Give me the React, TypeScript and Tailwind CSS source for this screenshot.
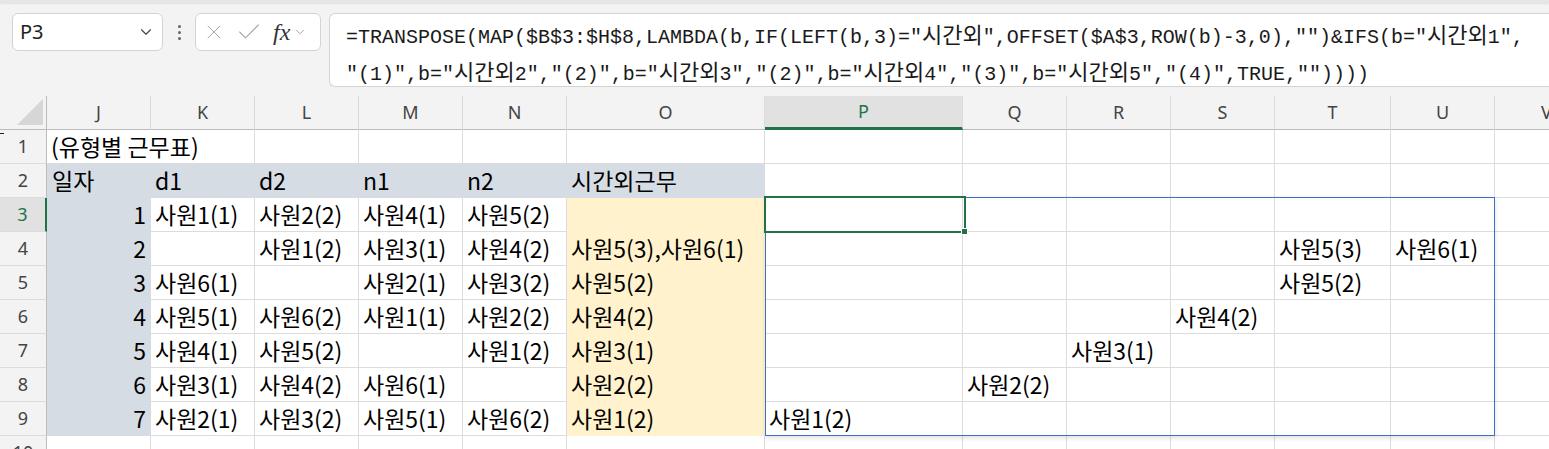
import React from 'react';
import { ChevronDown, X, Check } from 'lucide-react';

const COL_LETTERS = ['J', 'K', 'L', 'M', 'N', 'O', 'P', 'Q', 'R', 'S', 'T', 'U', 'V'];

const GRID_COLS =
  'grid grid-cols-[47px_104px_104px_104px_104px_104px_198px_198px_104px_104px_104px_116px_104px_104px]';

// K..N, O, then spill P..U
const body: { day: string; shifts: string[]; extra: string; spill: string[] }[] = [
  { day: '1', shifts: ['사원1(1)', '사원2(2)', '사원4(1)', '사원5(2)'], extra: '', spill: ['', '', '', '', '', ''] },
  { day: '2', shifts: ['', '사원1(2)', '사원3(1)', '사원4(2)'], extra: '사원5(3),사원6(1)', spill: ['', '', '', '', '사원5(3)', '사원6(1)'] },
  { day: '3', shifts: ['사원6(1)', '', '사원2(1)', '사원3(2)'], extra: '사원5(2)', spill: ['', '', '', '', '사원5(2)', ''] },
  { day: '4', shifts: ['사원5(1)', '사원6(2)', '사원1(1)', '사원2(2)'], extra: '사원4(2)', spill: ['', '', '', '사원4(2)', '', ''] },
  { day: '5', shifts: ['사원4(1)', '사원5(2)', '', '사원1(2)'], extra: '사원3(1)', spill: ['', '', '사원3(1)', '', '', ''] },
  { day: '6', shifts: ['사원3(1)', '사원4(2)', '사원6(1)', ''], extra: '사원2(2)', spill: ['', '사원2(2)', '', '', '', ''] },
  { day: '7', shifts: ['사원2(1)', '사원3(2)', '사원5(1)', '사원6(2)'], extra: '사원1(2)', spill: ['사원1(2)', '', '', '', '', ''] },
];

const FORMULA = [
  '=TRANSPOSE(MAP($B$3:$H$8,LAMBDA(b,IF(LEFT(b,3)="시간외",OFFSET($A$3,ROW(b)-3,0),"")&IFS(b="시간외1",',
  '"(1)",b="시간외2","(2)",b="시간외3","(2)",b="시간외4","(3)",b="시간외5","(4)",TRUE,""))))',
];

const cellFont = "font-['Noto_Sans_CJK_KR',sans-serif] text-[23px] text-black leading-none";

// hangul in the formula bar is drawn a little wider than the mono glyphs
function FormulaLine({ text }: { text: string }) {
  const parts = text.split(/([가-힣]+)/);
  return (
    <div>
      {parts.map((p, i) =>
        /[가-힣]/.test(p) ? (
          <span key={i} className="font-['Noto_Sans_CJK_KR',sans-serif] text-[22px]">
            {p}
          </span>
        ) : (
          <span key={i}>{p}</span>
        )
      )}
    </div>
  );
}

function Cell({
  children,
  fill,
  right,
  className = '',
}: {
  children?: React.ReactNode;
  fill?: 'blue' | 'yellow';
  right?: boolean;
  className?: string;
}) {
  const bg =
    fill === 'blue'
      ? 'bg-[#d6dce4] border-[#d6dce4]'
      : fill === 'yellow'
      ? 'bg-[#fff2cc] border-[#fff2cc]'
      : 'bg-white border-[#dcdcdc]';
  return (
    <div
      className={`h-[34px] border-r border-b ${bg} flex items-center whitespace-nowrap overflow-visible ${
        right ? 'justify-end pr-[4px]' : 'pl-[4px]'
      } ${cellFont} ${className}`}
    >
      {children}
    </div>
  );
}

function RowHead({ n, active }: { n: number; active?: boolean }) {
  return (
    <div
      className={`h-[34px] border-b border-[#dcdcdc] flex items-center justify-center font-['Noto_Sans',sans-serif] text-[18px] ${
        active
          ? 'bg-[#e1e1e1] text-[#217346] border-r-2 border-r-[#217346]'
          : 'bg-[#f3f3f3] text-[#444] border-r border-r-[#bcbcbc]'
      }`}
    >
      {n}
    </div>
  );
}

function FormulaBar() {
  return (
    <div className="relative h-[96px] bg-[#f3f3f3] flex items-start pt-[13px] pl-[12px]">
      <div className="absolute left-0 right-0 top-0 h-[3px] bg-[#e6e6e6] shadow-[0_1px_2px_rgba(0,0,0,0.08)]" />
      <div className="w-[151px] h-[38px] bg-white border border-[#d4d4d4] rounded-[6px] flex items-center justify-between pl-[7px] pr-[7px]">
        <span className="font-['Noto_Sans',sans-serif] text-[20px] text-[#222]">P3</span>
        <ChevronDown size={18} strokeWidth={1.5} className="text-[#444]" />
      </div>
      <div className="w-[32px] h-[38px] flex flex-col items-center justify-center gap-[3px]">
        <span className="w-[3px] h-[3px] rounded-full bg-[#666]" />
        <span className="w-[3px] h-[3px] rounded-full bg-[#666]" />
        <span className="w-[3px] h-[3px] rounded-full bg-[#666]" />
      </div>
      <div className="w-[126px] h-[38px] bg-white border border-[#d4d4d4] rounded-[6px] flex items-center pl-[6px]">
        <X size={24} strokeWidth={1} className="text-[#a8a8a8]" />
        <Check size={28} strokeWidth={1} className="text-[#a8a8a8] ml-[9px]" />
        <span className="ml-[10px] font-['Liberation_Serif',serif] italic text-[24px] text-[#333] leading-none">
          fx
        </span>
        <ChevronDown size={14} strokeWidth={1.3} className="text-[#888] ml-[3px]" />
      </div>
      <div className="ml-[8px] flex-1 h-[74px] bg-white border border-r-0 border-[#d4d4d4] rounded-l-[6px] pl-[16px] pt-[3px] font-['Liberation_Mono',monospace] text-[20px] leading-[33px] text-[#1a1a1a] whitespace-nowrap">
        {FORMULA.map((line, i) => (
          <FormulaLine key={i} text={line} />
        ))}
      </div>
    </div>
  );
}

function ColumnHeader() {
  return (
    <div className={`${GRID_COLS} h-[34px]`}>
      <div className="bg-[#f3f3f3] border-r border-b border-[#bcbcbc] relative">
        <svg className="absolute right-[3px] bottom-[4px]" width="26" height="26" viewBox="0 0 26 26">
          <polygon points="26,0 26,26 0,26" fill="#d6d6d6" />
        </svg>
      </div>
      {COL_LETTERS.map((c) => (
        <div
          key={c}
          className={`flex items-center justify-center font-['Noto_Sans',sans-serif] text-[18px] border-r border-r-[#dcdcdc] ${
            c === 'P'
              ? 'bg-[#e1e1e1] text-[#217346] border-b-[3px] border-b-[#217346]'
              : 'bg-[#f3f3f3] text-[#444] border-b border-b-[#bcbcbc]'
          }`}
        >
          {c}
        </div>
      ))}
    </div>
  );
}

export default function App() {
  return (
    <div className="w-[1549px] h-[449px] overflow-hidden bg-white">
      <FormulaBar />
      <div className="w-[1599px]">
        <ColumnHeader />
        <div className={`${GRID_COLS} relative`}>
          <div className="absolute left-0 top-[3px] w-[4px] h-[1px] bg-[#222]" />

          {/* row 1 */}
          <RowHead n={1} />
          <Cell className="col-span-2">(유형별 근무표)</Cell>
          {Array.from({ length: 11 }).map((_, i) => (
            <Cell key={`r1-${i}`} />
          ))}

          {/* row 2 */}
          <RowHead n={2} />
          <Cell fill="blue" className="pl-[5px]">일자</Cell>
          <Cell fill="blue">d1</Cell>
          <Cell fill="blue">d2</Cell>
          <Cell fill="blue">n1</Cell>
          <Cell fill="blue">n2</Cell>
          <Cell fill="blue">시간외근무</Cell>
          {Array.from({ length: 7 }).map((_, i) => (
            <Cell key={`r2-${i}`} />
          ))}

          {body.map((row, ri) => (
            <React.Fragment key={row.day}>
              <RowHead n={ri + 3} active={ri === 0} />
              <Cell fill="blue" right>
                {row.day}
              </Cell>
              {row.shifts.map((s, si) => (
                <Cell key={si}>{s}</Cell>
              ))}
              <Cell fill="yellow">{row.extra}</Cell>
              {row.spill.map((s, si) => (
                <Cell key={`sp-${si}`} className={ri === 0 && si === 0 ? 'relative' : ''}>
                  {s}
                  {ri === 0 && si === 0 && (
                    <div className="absolute -left-[1px] -top-[2px] w-[202px] h-[37px] border-2 border-[#217346] z-20">
                      <div className="absolute -right-[4px] -bottom-[4px] w-[7px] h-[7px] bg-[#217346] border border-white" />
                    </div>
                  )}
                </Cell>
              ))}
              <Cell />
            </React.Fragment>
          ))}

          {/* row 10 */}
          <RowHead n={10} />
          {Array.from({ length: 13 }).map((_, i) => (
            <Cell key={`r10-${i}`} />
          ))}

          {/* spill range outline */}
          <div className="absolute left-[765px] top-[67px] w-[730px] h-[239px] border border-[#3c6fc6] shadow-[0_2px_5px_rgba(0,0,0,0.12)] pointer-events-none z-10" />
        </div>
      </div>
    </div>
  );
}
